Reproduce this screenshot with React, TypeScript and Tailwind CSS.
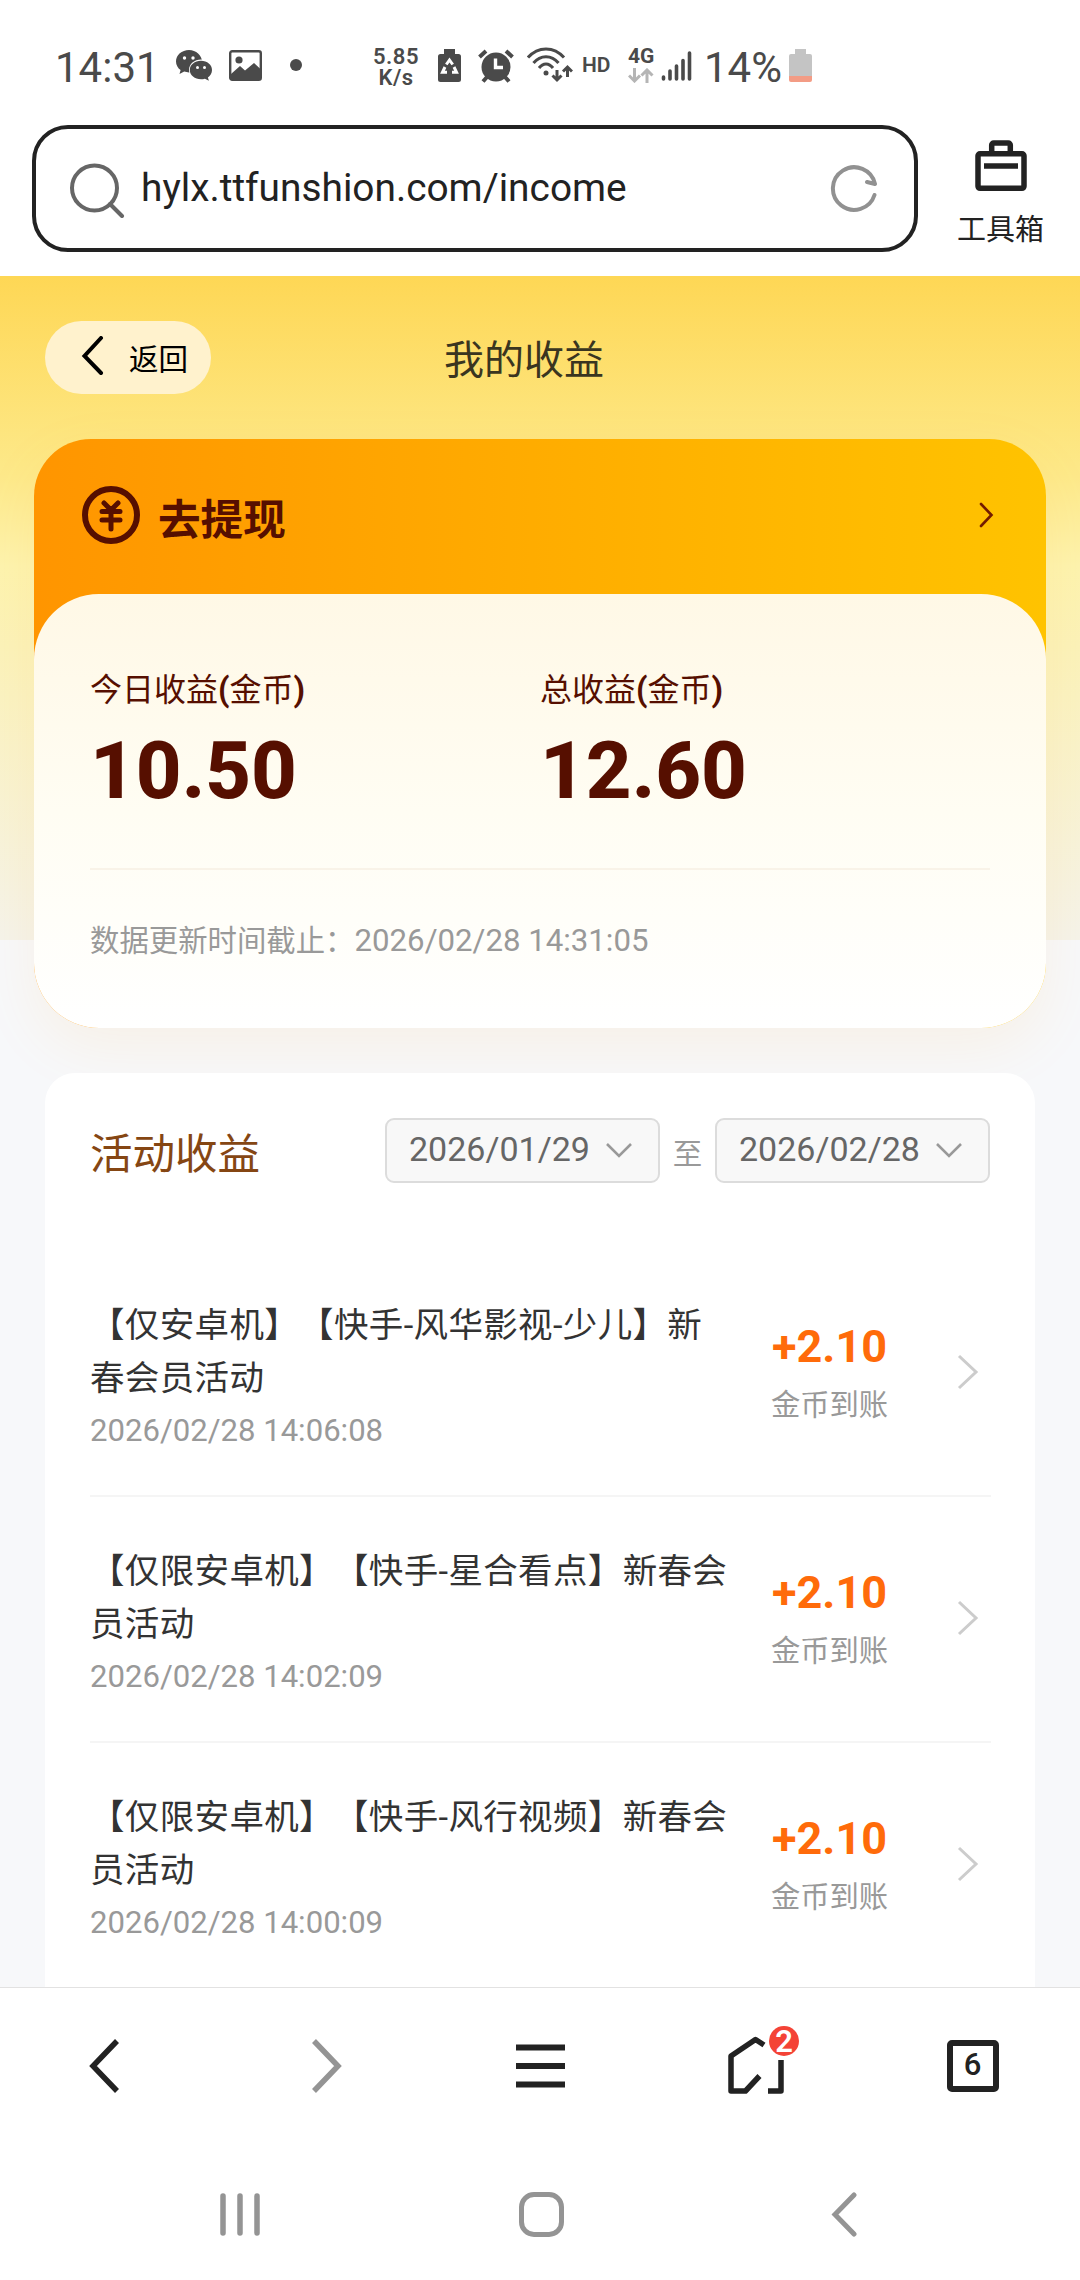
import type { ReactNode } from 'react'

interface Income {
  title: string
  time: string
  amount: string
}

const incomes: Income[] = [
  { title: '【仅安卓机】【快手-风华影视-少儿】新春会员活动', time: '2026/02/28 14:06:08', amount: '+2.10' },
  { title: '【仅限安卓机】【快手-星合看点】新春会员活动', time: '2026/02/28 14:02:09', amount: '+2.10' },
  { title: '【仅限安卓机】【快手-风行视频】新春会员活动', time: '2026/02/28 14:00:09', amount: '+2.10' },
]

function StatusBar() {
  return (
    <div className="h-[125px] pt-[44px] flex items-start text-[#4a4a4a]">
      <span className="ml-[55px] mt-[3px] w-[121px] text-[42px] leading-[42px]">14:31</span>
      <svg width="36" height="31" viewBox="0 0 36 31" className="mt-[6px]" fill="currentColor">
        <path d="M13 0C5.800 0 0 5 0 11.500c0 3.600 1.800 6.500 4.600 8.600L3.500 24l4.700-2.400c1.500.5 3.100.8 4.800.8C20 22.400 26 17.500 26 11.500S20 0 13 0z" />
        <ellipse cx="25" cy="20" rx="12" ry="10.500" fill="#fff" />
        <path d="M25 10.800c-6.200 0-11.200 4-11.200 9.200s5 9.300 11.200 9.300c1.400 0 2.700-.2 3.900-.6l4 2-1-3.200c2.500-1.700 4.100-4.400 4.100-7.500 0-5.200-4.800-9.200-11-9.200z" />
        <g fill="#fff">
          <circle cx="8.500" cy="8" r="1.700" />
          <circle cx="17" cy="8" r="1.700" />
          <circle cx="21.500" cy="17.500" r="1.500" />
          <circle cx="28.500" cy="17.500" r="1.500" />
        </g>
      </svg>
      <svg width="33" height="31" viewBox="0 0 33 31" className="ml-[17px] mt-[6px]">
        <rect x="1.200" y="1.200" width="30.600" height="28.600" rx="2" fill="none" stroke="currentColor" strokeWidth="2.400" />
        <circle cx="10" cy="10" r="3.600" fill="currentColor" />
        <path d="M2 24l9-8 5 4.500 9-7.500 7 6.500V30H2z" fill="currentColor" />
      </svg>
      <span className="ml-[28px] mt-[15px] size-[12px] rounded-full bg-[#4a4a4a]" />
      <span className="ml-[68px] mt-[2px] w-[52px] text-center text-[22px] leading-[21px] font-semibold tracking-[0.5px]">
        5.85
        <br />
        K/s
      </span>
      <svg width="23" height="34" viewBox="0 0 23 34" className="ml-[16px] mt-[5px]">
        <path d="M6 0h11v5h3.500A2.500 2.500 0 0 1 23 7.500v23a2.500 2.500 0 0 1-2.500 2.500h-18A2.500 2.500 0 0 1 0 30.500v-23A2.500 2.500 0 0 1 2.500 5H6z" fill="currentColor" />
        <g fill="none" stroke="#fff" strokeWidth="3">
          <path d="M8.300 15.500l3.200-4.500 3.200 4.500M7 18l-2.500 5.200H9M16 18l2.500 5.200H14" />
        </g>
        <path d="M11.500 15l3 4h-2v5h-2v-5h-2z" fill="currentColor" />
      </svg>
      <svg width="36" height="34" viewBox="0 0 36 34" className="ml-[17px] mt-[5px]">
        <circle cx="18" cy="18" r="14.500" fill="currentColor" />
        <path d="M1.500 8l6.500-6M34.500 8L28 2M9 28l-4 4.500M27 28l4 4.500" stroke="currentColor" strokeWidth="4" />
        <path d="M17.500 9.500v9H25" fill="none" stroke="#fff" strokeWidth="3.400" />
      </svg>
      <svg width="46" height="36" viewBox="0 0 46 36" className="ml-[13px] mt-[3px]" fill="none" stroke="currentColor" strokeWidth="3">
        <path d="M1 10.500C11-1 27-1 37 10.500M6.500 16c7-8.500 18-8.500 25 0M12 21c4-5.500 10-5.500 14 0" />
        <circle cx="19" cy="26" r="2.500" fill="currentColor" stroke="none" />
        <path d="M30 23v10M25.500 28.500l4.500 4.500 4.500-4.500M40.500 30V20M36 24.500l4.500-4.500 4.500 4.500" />
      </svg>
      <span className="ml-[9px] mt-[9px] w-[46px] text-[21px] leading-[24px] font-semibold">HD</span>
      <div className="mt-[2px] w-[33px] flex flex-col">
        <span className="text-[21px] leading-[21px] font-bold">4G</span>
        <svg width="26" height="15" viewBox="0 0 26 15" className="mt-[1px]" fill="none" stroke="#b5b5b5" strokeWidth="3">
          <path d="M6.500 0v13M1 7.500l5.500 5.500L12 7.500M19 15V2M13.500 7.500L19 2l5.500 5.500" />
        </svg>
      </div>
      <svg width="32" height="31" viewBox="0 0 32 31" className="mt-[7px]" stroke="currentColor" strokeWidth="3.600" strokeLinecap="round">
        <path d="M2.500 26v2M9 20v8M15.500 15v13M22 9.500V28M28.500 2v26" />
      </svg>
      <span className="ml-[11px] mt-[3px] w-[85px] text-[42px] leading-[42px]">14%</span>
      <svg width="23" height="34" viewBox="0 0 23 34" className="mt-[5px]">
        <path d="M6 0h11v5h4a2 2 0 0 1 2 2v20H0V7a2 2 0 0 1 2-2h4z" fill="#c4c4c4" />
        <path d="M0 27h23v4a2 2 0 0 1-2 2H2a2 2 0 0 1-2-2z" fill="#f39c85" />
      </svg>
    </div>
  )
}

function AddressBar() {
  return (
    <div className="h-[151px] flex items-start">
      <div className="ml-[32px] w-[886px] h-[127px] flex items-center rounded-[36px] border-4 border-[#222]">
        <svg width="56" height="56" viewBox="0 0 56 56" className="ml-[33px] mt-[2px]" fill="none" stroke="#666" strokeWidth="4">
          <circle cx="25.500" cy="26" r="22.500" />
          <path d="M41 42l12 12" strokeLinecap="round" />
        </svg>
        <span className="ml-[16px] mb-[2px] flex-1 text-[38.850px] leading-[48px] text-[#222]">hylx.ttfunshion.com/income</span>
        <svg width="48" height="50" viewBox="0 0 48 50" className="mr-[36px]" fill="none" stroke="#919191" strokeWidth="4" strokeLinecap="round" strokeLinejoin="round">
          <path d="M44.500 31A21.300 21.300 0 1 1 45 20l-8-2" />
        </svg>
      </div>
      <div className="flex-1 pt-[13px] pl-[3px] flex flex-col items-center">
        <svg width="52" height="54" viewBox="0 0 52 54" fill="none" stroke="#222" strokeWidth="5.500">
          <rect x="3" y="15.800" width="46" height="34.500" rx="2" />
          <path d="M16.700 15V7a2 2 0 0 1 2-2h14.600a2 2 0 0 1 2 2v8M9 28h34" />
        </svg>
        <span className="mt-[18px] text-[29px] leading-[40px] text-[#222]">工具箱</span>
      </div>
    </div>
  )
}

function SummaryCard() {
  return (
    <section className="mx-[34px] mt-[45px] rounded-t-[57px] rounded-b-[65px] bg-linear-to-r from-[#ff9500] to-[#ffc300] shadow-[0_20px_60px_rgba(255,149,0,0.08)]">
      <div className="h-[155px] pl-[48px] pr-[52px] flex items-center">
        <svg width="58" height="58" viewBox="0 0 58 58" className="mb-[4px]" fill="none" stroke="#560f00" strokeLinecap="round">
          <circle cx="29" cy="29" r="26" strokeWidth="6" />
          <path d="M22 17l7 7 7-7M20 25.500h18M20 34h18M29 25v18" strokeWidth="5" />
        </svg>
        <span className="ml-[18px] mt-[7px] flex-1 text-[42.600px] leading-[56px] font-bold text-[#560f00]">去提现</span>
        <svg width="16" height="26" viewBox="0 0 16 26" className="mb-[3px]" fill="none" stroke="#731c00" strokeWidth="2.600" strokeLinecap="round">
          <path d="M3 2l10.500 11L3 24" />
        </svg>
      </div>
      <div className="h-[434px] rounded-[65px] bg-linear-to-b from-[#fff8e6] via-[#fffdf3] to-white px-[56px] pt-[72px]">
        <div className="grid grid-cols-2 text-[#560f00]">
          <Stat label="今日收益" value="10.50" />
          <Stat label="总收益" value="12.60" />
        </div>
        <div className="mt-[50px] h-[2px] bg-[#f9f3e8]" />
        <p className="mt-[49px] text-[29.400px] leading-[44px] text-[#999]">
          数据更新时间截止：<span className="text-[31.200px]">2026/02/28 14:31:05</span>
        </p>
      </div>
    </section>
  )
}

function Stat({ label, value }: { label: string; value: string }) {
  return (
    <div className="flex flex-col">
      <span className="text-[32px] leading-[48px]">
        {label}
        <span className="text-[33px] font-bold">(</span>金币<span className="text-[33px] font-bold">)</span>
      </span>
      <span className="mt-[10px] text-[79.500px] leading-[94px] font-extrabold">{value}</span>
    </div>
  )
}

function DateSelect({ value }: { value: string }) {
  return (
    <button className="w-[275px] h-[65px] pl-[22px] pr-[25px] flex items-center justify-between rounded-[9px] border-2 border-[#dcdcdc] bg-[#f8f8f8] text-[34px] text-[#666]">
      <span className="mb-[3px]">{value}</span>
      <svg width="28" height="17" viewBox="0 0 28 17" fill="none" stroke="#999" strokeWidth="2.600">
        <path d="M2 2l12 12L26 2" />
      </svg>
    </button>
  )
}

function IncomeRow({ item }: { item: Income }) {
  return (
    <li className="h-[246px] pt-[48px] flex border-b-2 border-[#f5f5f5]">
      <div className="w-[641px]">
        <p className="text-[34.500px] leading-[53px] tracking-[0.350px] text-[#333] [text-spacing-trim:space-all]">{item.title}</p>
        <p className="text-[31.100px] leading-[52px] text-[#999]">{item.time}</p>
      </div>
      <div className="ml-[40px] w-[117px] pt-[18px] flex flex-col items-center whitespace-nowrap">
        <span className="text-[45px] leading-[60px] font-bold text-[#ff6b0a]">{item.amount}</span>
        <span className="mt-[6px] text-[29.300px] leading-[44px] text-[#999]">金币到账</span>
      </div>
      <svg width="24" height="38" viewBox="0 0 24 38" className="ml-[68px] mt-[54px]" fill="none" stroke="#ccc" strokeWidth="3">
        <path d="M3 3l17 16L3 35" />
      </svg>
    </li>
  )
}

function BarItem({ children }: { children: ReactNode }) {
  return <button className="relative w-[216px] h-full pb-[3px] flex items-center justify-center">{children}</button>
}

function BrowserBar() {
  return (
    <nav className="h-[159px] flex border-t border-[#e2e2e2] bg-white text-[#222]">
      <BarItem>
        <svg width="32" height="56" viewBox="0 0 32 56" className="mr-[7px]" fill="none" stroke="currentColor" strokeWidth="5.500">
          <path d="M28 3L4 28l24 25" />
        </svg>
      </BarItem>
      <BarItem>
        <svg width="32" height="56" viewBox="0 0 32 56" className="ml-[4px]" fill="none" stroke="#949494" strokeWidth="5.500">
          <path d="M4 3l24 25L4 53" />
        </svg>
      </BarItem>
      <BarItem>
        <svg width="49" height="44" viewBox="0 0 49 44" stroke="currentColor" strokeWidth="6">
          <path d="M0 3.500h49M0 22h49M0 40.500h49" />
        </svg>
      </BarItem>
      <BarItem>
        <svg width="56" height="58" viewBox="0 0 56 58" className="mb-px" fill="none" stroke="currentColor" strokeWidth="5.500" strokeLinejoin="round">
          <path d="M36 9l-8.500-5.500L3 20v35h14.500l14-15M40 55h13V24" />
        </svg>
        <span className="absolute left-[121px] top-[38px] size-[30px] rounded-full bg-[#f44336] text-center text-[31px] leading-[31px] font-semibold text-white">
          2
        </span>
      </BarItem>
      <BarItem>
        <span className="size-[52px] ml-px flex items-center justify-center rounded-[5px] border-[6px] border-[#222] text-[31px] font-medium">6</span>
      </BarItem>
    </nav>
  )
}

function SystemNav() {
  return (
    <div className="h-[134px] pt-[44px] flex items-start bg-white">
      <svg width="42" height="46" viewBox="0 0 42 46" className="ml-[219px]" stroke="#949494" strokeWidth="5.500" strokeLinecap="round">
        <path d="M4 6v37M21 6v37M38 6v37" />
      </svg>
      <span className="ml-[258px] mt-[2px] size-[45px] rounded-[15px] border-[5px] border-[#949494]" />
      <svg width="30" height="46" viewBox="0 0 30 46" className="ml-[266px] mt-px" fill="none" stroke="#949494" strokeWidth="5" strokeLinecap="round">
        <path d="M24 4L5 23.500 24 43" />
      </svg>
    </div>
  )
}

export default function App() {
  return (
    <div className="w-[1080px] h-[2280px] flex flex-col overflow-hidden bg-white font-[Roboto,'Noto_Sans_CJK_SC',sans-serif]">
      <StatusBar />
      <AddressBar />
      <main className="h-[1711px] overflow-hidden bg-[#f7f8fa] bg-[linear-gradient(180deg,#fed755_0px,#fde98a_200px,#fdf3ae_290px,#fbf2b9_370px,#f5f3ea_664px,transparent_664px)]">
        <header className="h-[118px] pt-[45px] flex items-start">
          <button className="ml-[45px] w-[166px] h-[73px] pl-[36px] flex items-center rounded-full bg-[#fff2cd]">
            <svg width="24" height="40" viewBox="0 0 24 40" className="mb-[3px]" fill="none" stroke="#000" strokeWidth="4" strokeLinecap="round">
              <path d="M20 2L3.500 20 20 37" />
            </svg>
            <span className="ml-[24px] mt-[6px] text-[29.500px] text-black">返回</span>
          </button>
          <h1 className="ml-[233px] mt-[11px] text-[40px] leading-[58px] text-[#3a3520]">我的收益</h1>
        </header>
        <SummaryCard />
        <section className="mt-[45px] mx-[45px] rounded-t-[30px] bg-white pl-[45px] pr-[44px] pt-[45px]">
          <div className="flex items-start">
            <h2 className="w-[295px] mt-[7px] text-[42.500px] leading-[60px] text-[#854613]">活动收益</h2>
            <DateSelect value="2026/01/29" />
            <span className="w-[55px] mt-[14px] text-center text-[29.500px] leading-[44px] text-[#999]">至</span>
            <DateSelect value="2026/02/28" />
          </div>
          <ul className="mt-[66px]">
            {incomes.map((item) => (
              <IncomeRow key={item.time} item={item} />
            ))}
          </ul>
        </section>
      </main>
      <BrowserBar />
      <SystemNav />
    </div>
  )
}
